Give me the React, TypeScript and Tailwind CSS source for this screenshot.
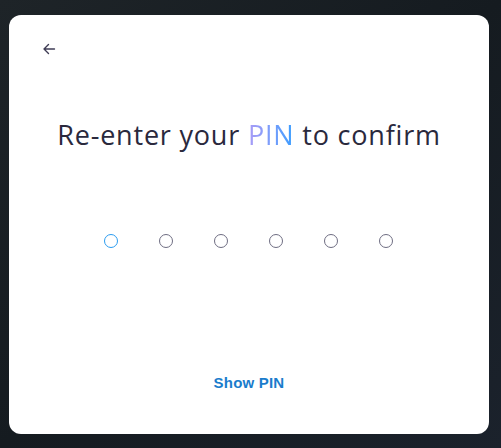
import React from "react";

const PinDot = ({ active = false }: { active?: boolean }) => (
  <div
    className={`h-[14px] w-[14px] rounded-full border ${
      active ? "border-[#2b9cf0]" : "border-[#6e6d82]"
    }`}
  />
);

export default function App() {
  return (
    <div
      className="h-[448px] w-[501px] overflow-hidden bg-gradient-to-br from-[#1e2428] via-[#151b20] to-[#1b222c] pl-[9px] pt-[15px]"
      style={{ fontFamily: "'Open Sans', Lato, sans-serif" }}
    >
      <div className="flex h-[419px] w-[480px] flex-col rounded-[12px] bg-white">
        {/* Back */}
        <div className="px-[33px] pt-[27px]">
          <svg width="14" height="14" viewBox="0 0 14 14" fill="none">
            <path
              d="M12.5 7H2M6.5 2.5L2 7l4.5 4.5"
              stroke="#3f3c55"
              strokeWidth="1.4"
              strokeLinecap="round"
              strokeLinejoin="round"
            />
          </svg>
        </div>

        {/* Title */}
        <h1 className="mt-[61px] text-center text-[27px] leading-[36px] tracking-[0.8px] text-[#2a293d]">
          Re-enter your{" "}
          <span className="bg-gradient-to-r from-[#a99cf6] to-[#2f9cff] bg-clip-text text-transparent">
            PIN
          </span>{" "}
          to confirm
        </h1>

        {/* Dots */}
        <div className="mt-[81px] flex justify-center gap-[41px] pr-[2px]">
          <PinDot active />
          <PinDot />
          <PinDot />
          <PinDot />
          <PinDot />
          <PinDot />
        </div>

        {/* Show PIN */}
        <div className="mt-auto pb-[40px] text-center">
          <button
            className="text-[15px] font-bold tracking-[0.2px] text-[#1a7ccc]"
            style={{ fontFamily: "'Liberation Sans', Arial, sans-serif" }}
          >
            Show PIN
          </button>
        </div>
      </div>
    </div>
  );
}
